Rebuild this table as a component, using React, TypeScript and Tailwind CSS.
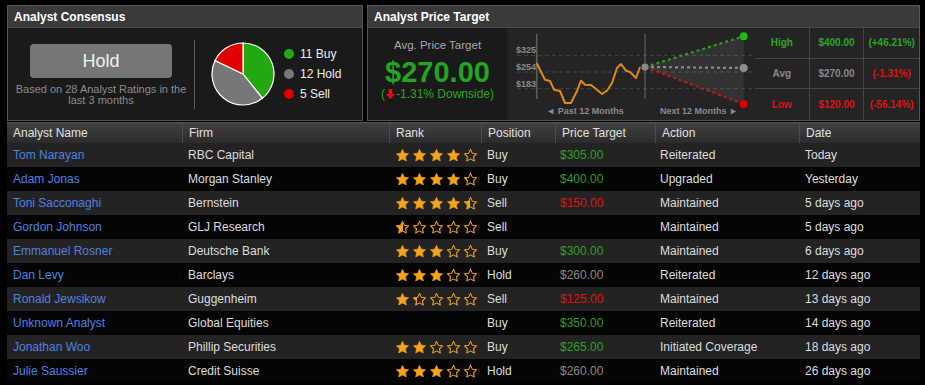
import { useId } from "react";

const STAR =
  "M12 2.2l2.95 6.2 6.75.85-4.95 4.7 1.3 6.75L12 17.4l-6.05 3.3 1.3-6.75-4.95-4.7 6.75-.85z";

type Row = {
  name: string;
  firm: string;
  rank: number | null;
  pos: string;
  pt: string;
  ptColor: string;
  action: string;
  date: string;
};

const ROWS: Row[] = [
  { name: "Tom Narayan", firm: "RBC Capital", rank: 4, pos: "Buy", pt: "$305.00", ptColor: "text-[#2f9e2a]", action: "Reiterated", date: "Today" },
  { name: "Adam Jonas", firm: "Morgan Stanley", rank: 4.2, pos: "Buy", pt: "$400.00", ptColor: "text-[#2f9e2a]", action: "Upgraded", date: "Yesterday" },
  { name: "Toni Sacconaghi", firm: "Bernstein", rank: 4.5, pos: "Sell", pt: "$150.00", ptColor: "text-[#e01010]", action: "Maintained", date: "5 days ago" },
  { name: "Gordon Johnson", firm: "GLJ Research", rank: 0.5, pos: "Sell", pt: "", ptColor: "", action: "Maintained", date: "5 days ago" },
  { name: "Emmanuel Rosner", firm: "Deutsche Bank", rank: 3, pos: "Buy", pt: "$300.00", ptColor: "text-[#2f9e2a]", action: "Maintained", date: "6 days ago" },
  { name: "Dan Levy", firm: "Barclays", rank: 3, pos: "Hold", pt: "$260.00", ptColor: "text-[#8a8a8a]", action: "Reiterated", date: "12 days ago" },
  { name: "Ronald Jewsikow", firm: "Guggenheim", rank: 1.3, pos: "Sell", pt: "$125.00", ptColor: "text-[#e01010]", action: "Maintained", date: "13 days ago" },
  { name: "Unknown Analyst", firm: "Global Equities", rank: null, pos: "Buy", pt: "$350.00", ptColor: "text-[#2f9e2a]", action: "Reiterated", date: "14 days ago" },
  { name: "Jonathan Woo", firm: "Phillip Securities", rank: 2, pos: "Buy", pt: "$265.00", ptColor: "text-[#2f9e2a]", action: "Initiated Coverage", date: "18 days ago" },
  { name: "Julie Saussier", firm: "Credit Suisse", rank: 3, pos: "Hold", pt: "$260.00", ptColor: "text-[#8a8a8a]", action: "Maintained", date: "26 days ago" },
];

const COLS = "grid grid-cols-[175px_207px_92px_74px_100px_144px_1fr]";

function Star({ fill }: { fill: number }) {
  const id = useId().replace(/:/g, "");
  return (
    <svg width="15" height="15" viewBox="0 0 24 24">
      <defs>
        <linearGradient id={id}>
          <stop offset={fill} stopColor="#f7a21b" />
          <stop offset={fill} stopColor="#f7a21b" stopOpacity="0" />
        </linearGradient>
      </defs>
      <path
        d={STAR}
        fill={`url(#${id})`}
        stroke="#e39a1f"
        strokeWidth={fill >= 1 ? 1.2 : 1.8}
        strokeLinejoin="round"
      />
    </svg>
  );
}

function Stars({ value }: { value: number }) {
  return (
    <div className="flex gap-[2px]">
      {[0, 1, 2, 3, 4].map((i) => (
        <Star key={i} fill={Math.max(0, Math.min(1, value - i))} />
      ))}
    </div>
  );
}

function Pie() {
  return (
    <svg width="64" height="64" viewBox="0 0 64 64">
      <path d="M32 32 L32 1 A31 31 0 0 1 51.33 56.24 Z" fill="#22a811" stroke="#fff" strokeWidth="1.2" />
      <path d="M32 32 L51.33 56.24 A31 31 0 0 1 4.07 18.55 Z" fill="#777" stroke="#fff" strokeWidth="1.2" />
      <path d="M32 32 L4.07 18.55 A31 31 0 0 1 32 1 Z" fill="#e00000" stroke="#fff" strokeWidth="1.2" />
    </svg>
  );
}

function Chart() {
  const pts =
    "29.7,35 33,41.7 38,51.7 43,53 47,61.7 53,63 58,75 64,75 70,63 74,52.7 78,56.7 84,57 90,61.7 95,66 100,62.7 105,55 110,40 114,36 119,42.7 123,44 129,50 133,39";
  return (
    <svg width="248" height="91" viewBox="0 0 248 91" className="shrink-0">
      {[27.3, 44, 60.7].map((y) => (
        <line key={y} x1="10" x2="248" y1={y} y2={y} stroke="#474747" strokeDasharray="4 3" />
      ))}
      <g fill="#8a8a8a" fontSize="9" fontWeight="bold" fontFamily="Liberation Sans, Arial, sans-serif">
        <text x="9" y="25">$325</text>
        <text x="9" y="42">$254</text>
        <text x="9" y="58.5">$183</text>
        <text x="78" y="86" textAnchor="middle">◄ Past 12 Months</text>
        <text x="192" y="86" textAnchor="middle">Next 12 Months ►</text>
      </g>
      <line x1="29.7" x2="29.7" y1="6" y2="71" stroke="#5e5e5e" strokeWidth="1.6" />
      <line x1="138" x2="138" y1="6" y2="71" stroke="#6a6a6a" strokeWidth="1" />
      <polygon points="138,39 236.7,8.3 236.7,76" fill="#ffffff" fillOpacity="0.07" />
      <polyline points={pts} fill="none" stroke="#e08a1a" strokeWidth="2" strokeLinejoin="round" />
      <line x1="138" y1="39" x2="236.7" y2="8.3" stroke="#2a9d22" strokeWidth="2.2" strokeDasharray="3 3" />
      <line x1="138" y1="39" x2="236.7" y2="40" stroke="#8a8a8a" strokeWidth="2.2" strokeDasharray="3 3" />
      <line x1="138" y1="39" x2="236.7" y2="76" stroke="#c81414" strokeWidth="2.2" strokeDasharray="3 3" />
      <circle cx="138" cy="39" r="3.6" fill="#8a8a8a" />
      <circle cx="236.7" cy="8.3" r="4" fill="#22bb11" />
      <circle cx="236.7" cy="40" r="4" fill="#8f8f8f" />
      <circle cx="236.7" cy="76" r="4" fill="#e00000" />
    </svg>
  );
}

function PanelHeader({ title }: { title: string }) {
  return (
    <div className="h-[22px] bg-[#3a3a3a] border-b border-[#4a4a4a] px-[6px] flex items-center text-[12px] font-bold text-white">
      {title}
    </div>
  );
}

export default function App() {
  return (
    <div className="w-[925px] h-[385px] overflow-hidden bg-black pt-[5px] pl-[7px] pr-[5px] font-['Liberation_Sans',Arial,sans-serif]">
      <div className="flex gap-[4px] h-[116px]">
        {/* consensus */}
        <div className="w-[356px] border border-[#555] bg-[#1a1a1a] flex flex-col">
          <PanelHeader title="Analyst Consensus" />
          <div className="flex flex-1">
            <div className="w-[186px] flex flex-col items-center pt-[16px]">
              <div className="w-[142px] h-[34px] rounded-[4px] bg-[#767676] flex items-center justify-center text-[18px] text-[#f2f2f2]">
                Hold
              </div>
              <div className="mt-[6px] text-[11px] leading-[11px] text-[#8c8c8c] text-center">
                Based on 28 Analyst Ratings in the
                <br />
                last 3 months
              </div>
            </div>
            <div className="w-px h-[69px] bg-[#5a5a5a] self-center" />
            <div className="flex items-center pl-[16px] gap-[9px]">
              <Pie />
              <div className="flex flex-col gap-[5px] text-[12px] leading-[15px] text-[#eee]">
                <div className="flex items-center gap-[6px]"><span className="w-[10px] h-[10px] rounded-full bg-[#22aa11]" />11 Buy</div>
                <div className="flex items-center gap-[6px]"><span className="w-[10px] h-[10px] rounded-full bg-[#777]" />12 Hold</div>
                <div className="flex items-center gap-[6px]"><span className="w-[10px] h-[10px] rounded-full bg-[#e00000]" />5 Sell</div>
              </div>
            </div>
          </div>
        </div>

        {/* price target */}
        <div className="flex-1 border border-[#555] bg-[#242424] flex flex-col">
          <PanelHeader title="Analyst Price Target" />
          <div className="flex flex-1">
            <div className="w-[139px] bg-[#1a1a1a] flex flex-col items-center pt-[10px]">
              <div className="text-[11.5px] leading-[14px] text-[#a8a8a8]">Avg. Price Target</div>
              <div className="mt-[5px] text-[29px] leading-[30px] font-bold text-[#23a51f]">$270.00</div>
              <div className="flex items-center text-[12px] leading-[14px] text-[#2da52a]">
                (
                <svg width="9" height="10" viewBox="0 0 9 10" className="mx-[1px]">
                  <path d="M2.6 0h3.8v5h2.6L4.5 10 0 5h2.6z" fill="#e01010" />
                </svg>
                -1.31% Downside)
              </div>
            </div>
            <Chart />
            <div className="flex-1 grid grid-cols-3 grid-rows-3 text-[10px] font-bold">
              <div className="flex items-center justify-center border-b border-r border-[#444] text-[#2da52a]">High</div>
              <div className="flex items-center justify-center border-b border-r border-[#444] text-[#2da52a]">$400.00</div>
              <div className="flex items-center justify-center border-b border-[#444] text-[#2da52a]">(+46.21%)</div>
              <div className="flex items-center justify-center border-b border-r border-[#444] text-[#888]">Avg</div>
              <div className="flex items-center justify-center border-b border-r border-[#444] text-[#888]">$270.00</div>
              <div className="flex items-center justify-center border-b border-[#444] text-[#e01010]">(-1.31%)</div>
              <div className="flex items-center justify-center border-r border-[#444] text-[#e01010]">Low</div>
              <div className="flex items-center justify-center border-r border-[#444] text-[#e01010]">$120.00</div>
              <div className="flex items-center justify-center text-[#e01010]">(-56.14%)</div>
            </div>
          </div>
        </div>
      </div>

      {/* ratings table */}
      <div className="mt-[1px]">
        <div className={`${COLS} h-[21px] bg-linear-to-b from-[#414141] to-[#2b2b2b] border-t border-[#555] text-[12px] text-[#e0e0e0]`}>
          {["Analyst Name", "Firm", "Rank", "Position", "Price Target", "Action", "Date"].map((h, i) => (
            <div key={h} className={`flex items-center pl-[6px] ${i > 0 ? "border-l border-[#4c4c4c]" : ""}`}>
              {h}
            </div>
          ))}
        </div>
        {ROWS.map((r, i) => (
          <div
            key={r.name}
            className={`${COLS} h-[24px] text-[12px] text-[#dedede] ${i % 2 === 0 ? "bg-[#232323]" : "bg-[#050505]"}`}
          >
            <div className="flex items-center pl-[6px] text-[#4f80e0]">{r.name}</div>
            <div className="flex items-center pl-[6px]">{r.firm}</div>
            <div className="flex items-center pl-[6px]">{r.rank !== null && <Stars value={r.rank} />}</div>
            <div className="flex items-center pl-[6px]">{r.pos}</div>
            <div className={`flex items-center pl-[5px] ${r.ptColor}`}>{r.pt}</div>
            <div className="flex items-center pl-[5px]">{r.action}</div>
            <div className="flex items-center pl-[6px]">{r.date}</div>
          </div>
        ))}
      </div>
    </div>
  );
}
